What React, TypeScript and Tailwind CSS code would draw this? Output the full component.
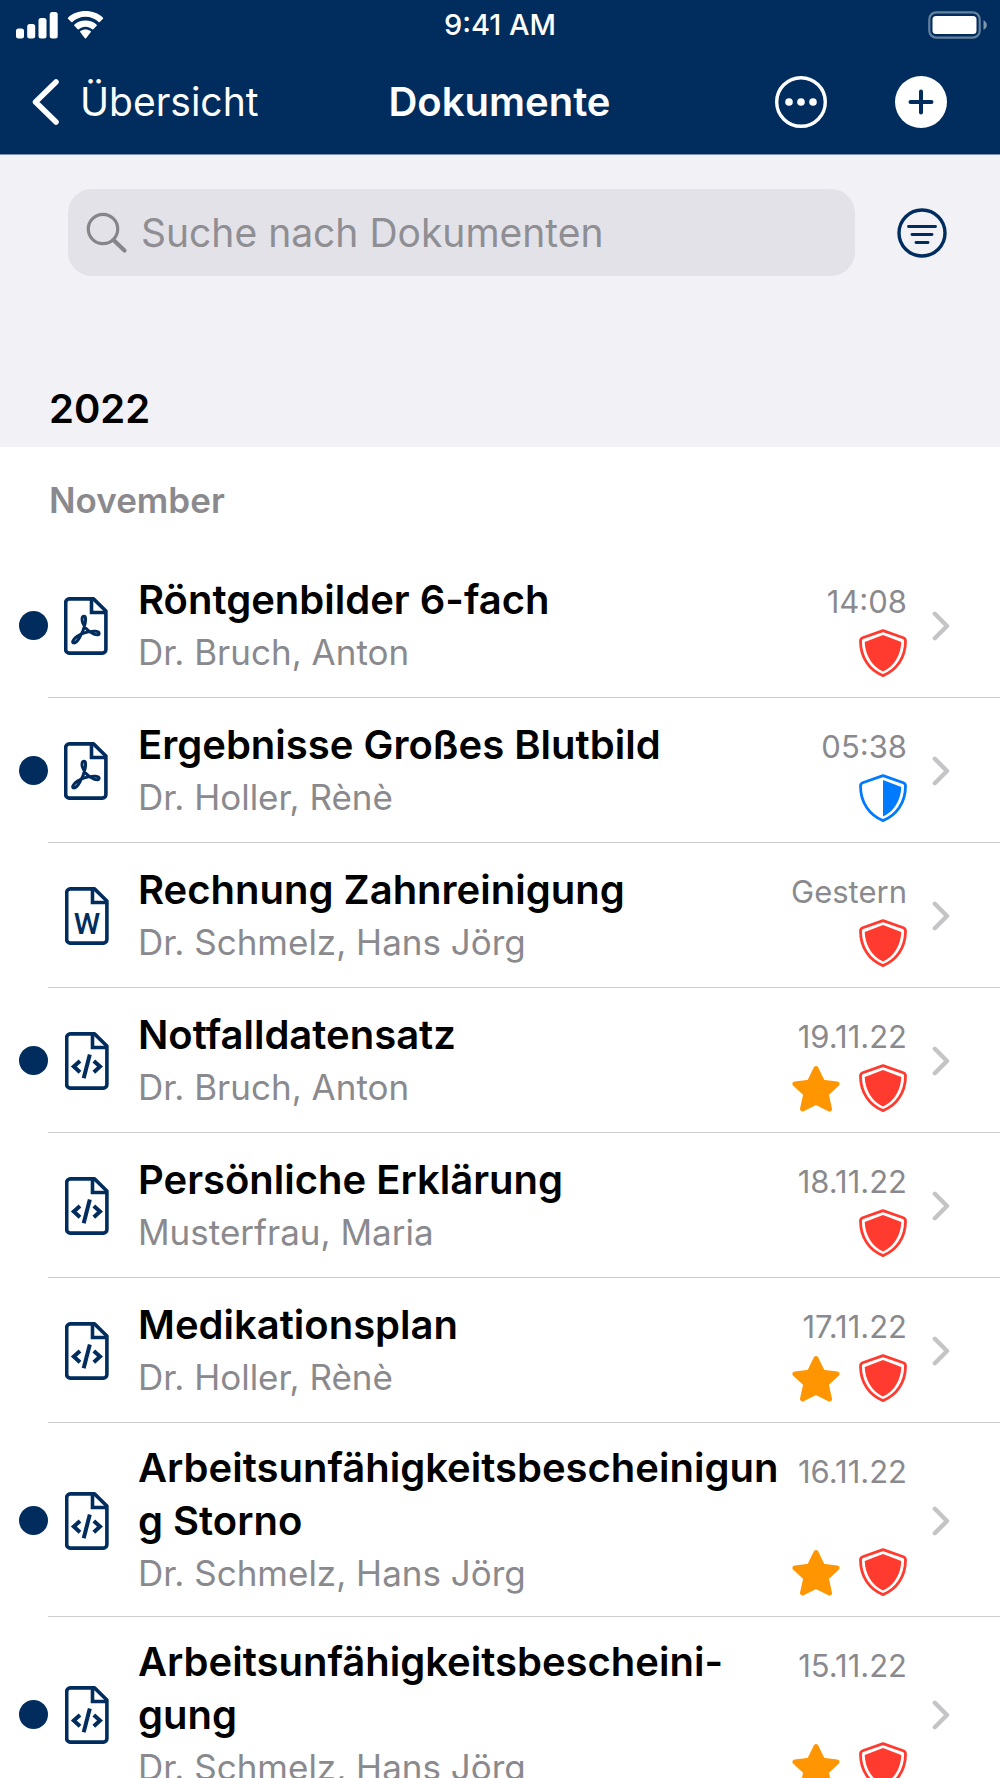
import type { ReactNode } from "react";

type FileKind = "pdf" | "word" | "code";
type Protection = "full" | "half";

interface DocumentEntry {
  id: number;
  title: string;
  author: string;
  date: string;
  kind: FileKind;
  protection: Protection;
  unread?: boolean;
  favorite?: boolean;
}

const documents: DocumentEntry[] = [
  { id: 1, title: "Röntgenbilder 6-fach", author: "Dr. Bruch, Anton", date: "14:08", kind: "pdf", protection: "full", unread: true },
  { id: 2, title: "Ergebnisse Großes Blutbild", author: "Dr. Holler, Rènè", date: "05:38", kind: "pdf", protection: "half", unread: true },
  { id: 3, title: "Rechnung Zahnreinigung", author: "Dr. Schmelz, Hans Jörg", date: "Gestern", kind: "word", protection: "full" },
  { id: 4, title: "Notfalldatensatz", author: "Dr. Bruch, Anton", date: "19.11.22", kind: "code", protection: "full", unread: true, favorite: true },
  { id: 5, title: "Persönliche Erklärung", author: "Musterfrau, Maria", date: "18.11.22", kind: "code", protection: "full" },
  { id: 6, title: "Medikationsplan", author: "Dr. Holler, Rènè", date: "17.11.22", kind: "code", protection: "full", favorite: true },
  { id: 7, title: "Arbeitsunfähigkeitsbescheinigun\ng Storno", author: "Dr. Schmelz, Hans Jörg", date: "16.11.22", kind: "code", protection: "full", unread: true, favorite: true },
  { id: 8, title: "Arbeitsunfähigkeitsbescheini-\ngung", author: "Dr. Schmelz, Hans Jörg", date: "15.11.22", kind: "code", protection: "full", unread: true, favorite: true },
];

function SignalIcon() {
  return (
    <svg width="42" height="28" viewBox="0 0 42 28" fill="currentColor" aria-hidden="true">
      <rect x="0" y="17.5" width="8" height="10" rx="2.5" />
      <rect x="11.2" y="13" width="8" height="14.5" rx="2.5" />
      <rect x="22.5" y="7" width="8" height="20.5" rx="2.5" />
      <rect x="33.7" y="1" width="8" height="26.5" rx="2.5" />
    </svg>
  );
}

function WifiIcon() {
  return (
    <svg width="37" height="28" viewBox="1.5 0 35 27" fill="currentColor" aria-hidden="true">
      <path d="M19 5.6c4.9 0 9.300 1.900 12.700 5.100.3.300.7.300 1 0l3.200-3.200c.3-.3.300-.8 0-1.100C31.400 2.200 25.500 0 19 0S6.600 2.200 2.100 6.400c-.3.300-.3.800 0 1.100l3.200 3.200c.3.300.7.300 1 0C9.700 7.500 14.100 5.600 19 5.600z" />
      <path d="M19 15.100c2.500 0 4.700.9 6.400 2.500.3.300.8.300 1.100 0l3.300-3.300c.3-.3.300-.8 0-1.100C26.900 10.600 23.100 9.200 19 9.200s-7.900 1.400-10.800 4c-.3.300-.3.800 0 1.100l3.300 3.300c.3.300.8.300 1.100 0 1.700-1.600 3.900-2.500 6.400-2.500z" />
      <path d="M24 20.400c.3-.3.300-.7 0-1-1.400-1-3.100-1.600-5-1.600s-3.600.6-5 1.600c-.3.300-.3.700 0 1l4.400 5.900c.3.400.9.400 1.200 0z" />
    </svg>
  );
}

function BatteryIcon() {
  return (
    <svg width="60" height="28" viewBox="0 0 60 28" aria-hidden="true">
      <rect x="1.300" y="1.300" width="50.400" height="25.400" rx="7" fill="none" stroke="#fff" strokeOpacity=".4" strokeWidth="2.200" />
      <rect x="4.500" y="5" width="44" height="18" rx="3.500" fill="#fff" />
      <path d="M55.500 9.200c2 .8 3.300 2.700 3.300 4.800s-1.300 4-3.300 4.800z" fill="#fff" fillOpacity=".5" />
    </svg>
  );
}

function FileIcon({ kind }: { kind: FileKind }) {
  return (
    <svg
      className={kind === "pdf" ? "mr-px" : "ml-px"}
      width="44"
      height="58"
      viewBox="0 0 44 58"
      fill="none"
      stroke="currentColor"
      strokeWidth="3.600"
      strokeLinejoin="round"
      strokeLinecap="round"
      aria-hidden="true"
    >
      <path d="M5.200 1.900H29.500L41.900 14V52.600a3.500 3.500 0 0 1-3.500 3.500H5.200a3.500 3.500 0 0 1-3.500-3.500V5.400a3.500 3.500 0 0 1 3.500-3.500z" />
      <path d="M27.500 2.500V15.500H41" strokeLinejoin="miter" />
      {kind === "pdf" && (
        <path
          strokeWidth="3"
          d="M20.100 19.300c-2.300 0-2.500 3.300-1.500 6.300 1.900 5.200 6.300 9.500 11.400 11.500 3.300 1.200 5.200.8 5.100-.8-.2-2.300-5.300-2.500-10.700-1.400-5.400 1-10.200 3.200-13.500 6.300-2 2-2.800 4-1.600 4.600 1.500.8 4-1.300 6.200-5 2.500-4.200 4.800-9.500 5.700-14.500.7-4.300.5-7-1.100-7z"
        />
      )}
      {kind === "word" && (
        <text
          x="22"
          y="47"
          textAnchor="middle"
          fill="currentColor"
          stroke="none"
          className="font-['Roboto'] text-[30px] font-medium"
        >
          W
        </text>
      )}
      {kind === "code" && (
        <>
          <path d="M15 29L8.800 34.600L15 40.200M28.800 29L35 34.600L28.800 40.200" strokeWidth="4" strokeLinejoin="miter" strokeLinecap="butt" />
          <path d="M24.800 22.600L18.700 46.200" strokeWidth="4" strokeLinecap="butt" />
        </>
      )}
    </svg>
  );
}

function ShieldIcon({ protection }: { protection: Protection }) {
  const outline =
    "M24 1.600L44.300 8.700Q46.500 9.500 46.500 12C46.500 28.500 37.500 41.500 24 46.600C10.500 41.500 1.500 28.500 1.500 12Q1.500 9.500 3.700 8.700Z";
  if (protection === "half") {
    return (
      <svg className="text-[#007aff]" width="48" height="48" viewBox="0 0 48 48" aria-label="Teilweise geschützt">
        <path d={outline} fill="none" stroke="currentColor" strokeWidth="2.800" strokeLinejoin="round" />
        <path d="M24 6L42.300 13C41.800 26 35.500 37 24 42.500Z" fill="currentColor" />
      </svg>
    );
  }
  return (
    <svg className="text-[#ff3b30]" width="48" height="48" viewBox="0 0 48 48" aria-label="Geschützt">
      <path d={outline} fill="none" stroke="currentColor" strokeWidth="2.800" strokeLinejoin="round" />
      <path d="M24 6L42.300 13C41.800 26 35.500 37 24 42.500C12.500 37 6.200 26 5.700 13Z" fill="currentColor" />
    </svg>
  );
}

function StarIcon() {
  return (
    <svg className="text-[#ff9500]" width="50" height="48" viewBox="0 0 50 48" aria-label="Favorit">
      <path
        d="M25 4.500L31.700 18.300L46 20L35.200 30L38.500 45L25 38.300L11.500 45L14.800 30L4 20L18.300 18.300Z"
        fill="currentColor"
        stroke="currentColor"
        strokeWidth="5"
        strokeLinejoin="round"
      />
    </svg>
  );
}

function ChevronIcon() {
  return (
    <svg width="18" height="30" viewBox="0 0 18 30" fill="none" stroke="#c4c4c6" strokeWidth="4.400" strokeLinecap="round" strokeLinejoin="round" aria-hidden="true">
      <path d="M2.800 2.800L15 15L2.800 27.200" />
    </svg>
  );
}

function IconButton({ label, children }: { label: string; children: ReactNode }) {
  return (
    <button type="button" aria-label={label} className="flex shrink-0 items-center justify-center">
      {children}
    </button>
  );
}

function StatusBar() {
  return (
    <div className="grid grid-cols-3 items-center px-4 pt-[9px]">
      <div className="flex items-center gap-[9px]">
        <SignalIcon />
        <WifiIcon />
      </div>
      <div className="text-center text-[29px] leading-8 font-medium">9:41 AM</div>
      <div className="-mr-1 flex justify-end">
        <BatteryIcon />
      </div>
    </div>
  );
}

function NavBar() {
  return (
    <nav className="grid flex-1 grid-cols-3 items-center pt-2 pr-[53px] pl-8">
      <a href="#uebersicht" className="flex items-center gap-[21px] text-[39px] leading-[48px]">
        <svg width="27" height="46" viewBox="0 0 27 46" fill="none" stroke="currentColor" strokeWidth="5.500" strokeLinecap="round" strokeLinejoin="round" aria-hidden="true">
          <path d="M24 3L3.500 23L24 43" />
        </svg>
        Übersicht
      </a>
      <h1 className="pl-5 text-center text-[40px] leading-[48px] font-semibold">Dokumente</h1>
      <div className="flex justify-end gap-[68px]">
        <IconButton label="Weitere Optionen">
          <svg width="52" height="52" viewBox="0 0 52 52" fill="currentColor" aria-hidden="true">
            <circle cx="26" cy="26" r="24.300" fill="none" stroke="currentColor" strokeWidth="3.400" />
            <circle cx="14" cy="26" r="3.800" />
            <circle cx="26" cy="26" r="3.800" />
            <circle cx="38" cy="26" r="3.800" />
          </svg>
        </IconButton>
        <IconButton label="Dokument hinzufügen">
          <svg width="52" height="52" viewBox="0 0 52 52" aria-hidden="true">
            <circle cx="26" cy="26" r="26" fill="#fff" />
            <path d="M26 15.500V36.500M15.500 26H36.500" stroke="#002d5d" strokeWidth="4" strokeLinecap="round" />
          </svg>
        </IconButton>
      </div>
    </nav>
  );
}

function SearchRow() {
  return (
    <div className="flex items-center gap-[42px] pt-[34px] pr-[53px] pl-[68px]">
      <label className="flex h-[87px] min-w-0 flex-1 items-center gap-[13px] rounded-[24px] bg-[#e3e2e8] pl-[18px]">
        <svg width="42" height="42" viewBox="0 0 42 42" fill="none" stroke="#85858a" aria-hidden="true" className="shrink-0">
          <circle cx="17" cy="17" r="14.700" strokeWidth="3.200" />
          <path d="M27.500 28L38.500 38.500" strokeWidth="4.200" strokeLinecap="round" />
        </svg>
        <input
          type="search"
          aria-label="Dokumente durchsuchen"
          placeholder="Suche nach Dokumenten"
          className="min-w-0 flex-1 bg-transparent text-[39px] leading-[48px] outline-none placeholder:text-[#8e8e93]"
        />
      </label>
      <IconButton label="Filtern">
        <svg width="50" height="50" viewBox="0 0 50 50" fill="none" stroke="#002d5d" strokeLinecap="round" aria-hidden="true">
          <circle cx="25" cy="25" r="23" strokeWidth="3.400" />
          <path d="M11.500 18.500H38.500M15 26.500H35M19 34.500H31" strokeWidth="2.900" />
        </svg>
      </IconButton>
    </div>
  );
}

function DocumentRow({ entry }: { entry: DocumentEntry }) {
  return (
    <li className="flex pl-[19px]">
      <div className="flex w-[29px] shrink-0 items-center">
        {entry.unread && <span className="size-[29px] shrink-0 rounded-full bg-[#002d5d]" />}
      </div>
      <a
        href={`#dokument-${entry.id}`}
        className="flex min-h-[145px] min-w-0 flex-1 items-center border-b border-[#cdcdcf] pt-[18px] pr-[50px] pb-4 pl-4"
      >
        <span className="flex w-[45px] shrink-0 text-[#002d5d]">
          <FileIcon kind={entry.kind} />
        </span>
        <div className="ml-[29px] min-w-0 flex-1">
          <h3 className="text-[40px] leading-[53px] font-semibold whitespace-pre-line text-black">{entry.title}</h3>
          <p className="text-[35px] leading-[53px] text-[#8a8a8e]">{entry.author}</p>
        </div>
        <div className="flex shrink-0 flex-col items-end justify-between self-stretch text-[31px] leading-[62px] text-[#8a8a8e]">
          <time>{entry.date}</time>
          <div className="-mt-2 mb-1 flex gap-[18px]">
            {entry.favorite && <StarIcon />}
            <ShieldIcon protection={entry.protection} />
          </div>
        </div>
        <span className="ml-[25px] shrink-0">
          <ChevronIcon />
        </span>
      </a>
    </li>
  );
}

export default function App() {
  return (
    <div className="flex h-screen flex-col overflow-hidden bg-white font-['Inter',sans-serif]">
      <header className="flex h-[155px] shrink-0 flex-col border-b border-[#8390ab] bg-[#002d5d] text-white">
        <StatusBar />
        <NavBar />
      </header>
      <main className="min-h-0 flex-1 overflow-y-auto [scrollbar-width:none]">
        <section className="h-[292px] bg-[#f2f1f6]">
          <SearchRow />
          <h2 className="pt-[109px] pl-[49px] text-[40px] leading-[48px] font-semibold">2022</h2>
        </section>
        <section>
          <h2 className="px-[49px] pt-[29px] pb-[29px] text-[35px] leading-[48px] font-semibold text-[#8a8a8e]">November</h2>
          <ul>
            {documents.map((entry) => (
              <DocumentRow key={entry.id} entry={entry} />
            ))}
          </ul>
        </section>
      </main>
    </div>
  );
}
